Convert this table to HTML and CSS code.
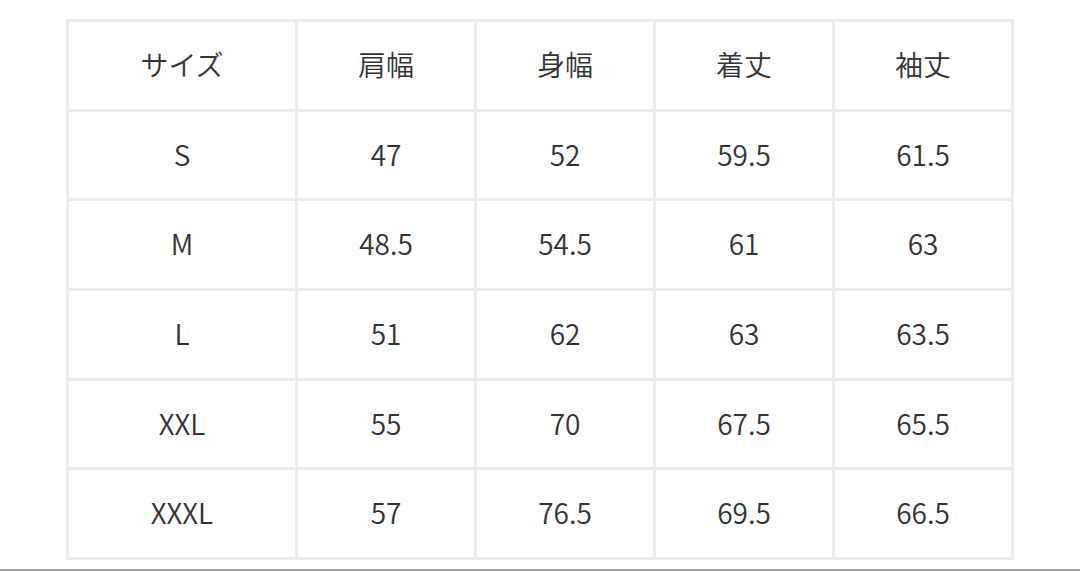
FILE: index.html
```html
<!DOCTYPE html>
<html lang="ja">
<head>
<meta charset="utf-8">
<link rel="stylesheet" href="styles.css">
</head>
<body>
<div class="wrap">
<table class="size-table">
<colgroup>
<col class="c-first"><col class="c"><col class="c"><col class="c"><col class="c">
</colgroup>
<tr><td>サイズ</td><td>肩幅</td><td>身幅</td><td>着丈</td><td>袖丈</td></tr>
<tr><td>S</td><td>47</td><td>52</td><td>59.5</td><td>61.5</td></tr>
<tr><td>M</td><td>48.5</td><td>54.5</td><td>61</td><td>63</td></tr>
<tr><td>L</td><td>51</td><td>62</td><td>63</td><td>63.5</td></tr>
<tr><td>XXL</td><td>55</td><td>70</td><td>67.5</td><td>65.5</td></tr>
<tr><td>XXXL</td><td>57</td><td>76.5</td><td>69.5</td><td>66.5</td></tr>
</table>
</div>
<div class="rule"></div>
</body>
</html>
```
FILE: styles.css
```css
html, body {
  margin: 0;
  padding: 0;
  background: #ffffff;
}
body {
  width: 1080px;
  height: 571px;
  overflow: hidden;
  font-family: "Noto Sans CJK JP", "Noto Sans", sans-serif;
  color: #333333;
}
.wrap {
  padding: 19px 0 0 66px;
  height: 549px;
  box-sizing: border-box;
}
.size-table {
  border-collapse: collapse;
  table-layout: fixed;
  width: 948px;
}
.c-first { width: 229px; }
.c { width: 179px; }
.size-table td {
  border: 3px solid #ececec;
  height: 83.7px;
  padding: 0 0 3px;
  text-align: center;
  vertical-align: middle;
  font-size: 28px;
  line-height: 1;
  font-weight: 350;
}
.rule {
  height: 0;
  margin-top: 20px;
  border-top: 2px solid #a8a8a8;
}
```
